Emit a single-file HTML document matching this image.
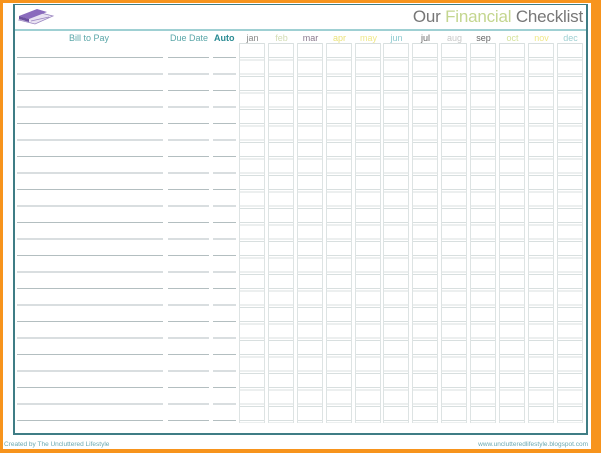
<!DOCTYPE html>
<html><head><meta charset="utf-8"><style>
html,body{margin:0;padding:0}
body{width:601px;height:453px;position:relative;overflow:hidden;background:#f7941d;font-family:"Liberation Sans",sans-serif}
.page{position:absolute;left:3px;top:3px;width:588px;height:446px;background:#fff}
.frame{position:absolute;left:13px;top:4px;width:571px;height:428px;border:2px solid #3f7d85;border-top-width:1px;background:#fff}
.hdr{position:absolute;left:15px;top:29px;width:571px;height:2px;background:#9fd0d3}
.title{position:absolute;right:18px;top:7px;font-size:17px;color:#777;letter-spacing:-0.2px}
.lbl{position:absolute;top:33px;font-size:9px;color:#5aa6a8}
.m{position:absolute;top:33px;font-size:9px;width:27px;text-align:center}
.col{position:absolute;top:43px;width:24px;height:380px;border-left:1px solid #dde3e3;border-right:1px solid #dde3e3;
background:repeating-linear-gradient(to bottom,#d8dfdf 0 1px,transparent 1px 14px,#d8dfdf 14px 15px,transparent 15px 16.5px)}
.rl{position:absolute;top:43px;height:380px;background:repeating-linear-gradient(to bottom,transparent 0 13.8px,#b3bec0 13.8px 15.2px,transparent 15.2px 16.5px)}
.foot{position:absolute;top:441px;font-size:6.5px;color:#6aa8b0}
</style></head><body>
<div class="page"></div>
<div class="frame"></div>
<div class="hdr"></div>
<svg style="position:absolute;left:17px;top:8px" width="38" height="18" viewBox="0 0 38 18">
<polygon points="2,12 20,4 36,8 18,16" fill="#e9e3f2" stroke="#9a86c0" stroke-width="0.8"/>
<polygon points="2,8 20,1 30,4 12,11" fill="#8a6bbd"/>
<polygon points="2,8 12,11 12,14 2,11" fill="#6b4f9e"/>
<line x1="14" y1="13" x2="32" y2="9" stroke="#9a86c0" stroke-width="0.8"/>
</svg>
<div class="title">Our <span style="color:#c4d68f">Financial</span> Checklist</div>
<div class="lbl" style="left:69px">Bill to Pay</div>
<div class="lbl" style="left:170px">Due Date</div>
<div class="lbl" style="left:214px;color:#2a8b93;font-weight:bold">Auto</div>
<div class="m" style="left:239px;color:#888">jan</div>
<div class="m" style="left:268px;color:#d3dcb4">feb</div>
<div class="m" style="left:297px;color:#8a7a8e">mar</div>
<div class="m" style="left:326px;color:#ebe27a">apr</div>
<div class="m" style="left:355px;color:#f0e88a">may</div>
<div class="m" style="left:383px;color:#8ccad0">jun</div>
<div class="m" style="left:412px;color:#666">jul</div>
<div class="m" style="left:441px;color:#c8c8c8">aug</div>
<div class="m" style="left:470px;color:#666">sep</div>
<div class="m" style="left:499px;color:#d4e29a">oct</div>
<div class="m" style="left:528px;color:#f0e88a">nov</div>
<div class="m" style="left:557px;color:#9fd0d3">dec</div>
<div class="rl" style="left:17px;width:146px"></div>
<div class="rl" style="left:168px;width:41px"></div>
<div class="rl" style="left:213px;width:23px"></div>
<div class="col" style="left:239px"></div>
<div class="col" style="left:268px"></div>
<div class="col" style="left:297px"></div>
<div class="col" style="left:326px"></div>
<div class="col" style="left:355px"></div>
<div class="col" style="left:383px"></div>
<div class="col" style="left:412px"></div>
<div class="col" style="left:441px"></div>
<div class="col" style="left:470px"></div>
<div class="col" style="left:499px"></div>
<div class="col" style="left:528px"></div>
<div class="col" style="left:557px"></div>
<div class="foot" style="left:4px">Created by The Uncluttered Lifestyle</div>
<div class="foot" style="right:13px">www.unclutteredlifestyle.blogspot.com</div>
</body></html>
